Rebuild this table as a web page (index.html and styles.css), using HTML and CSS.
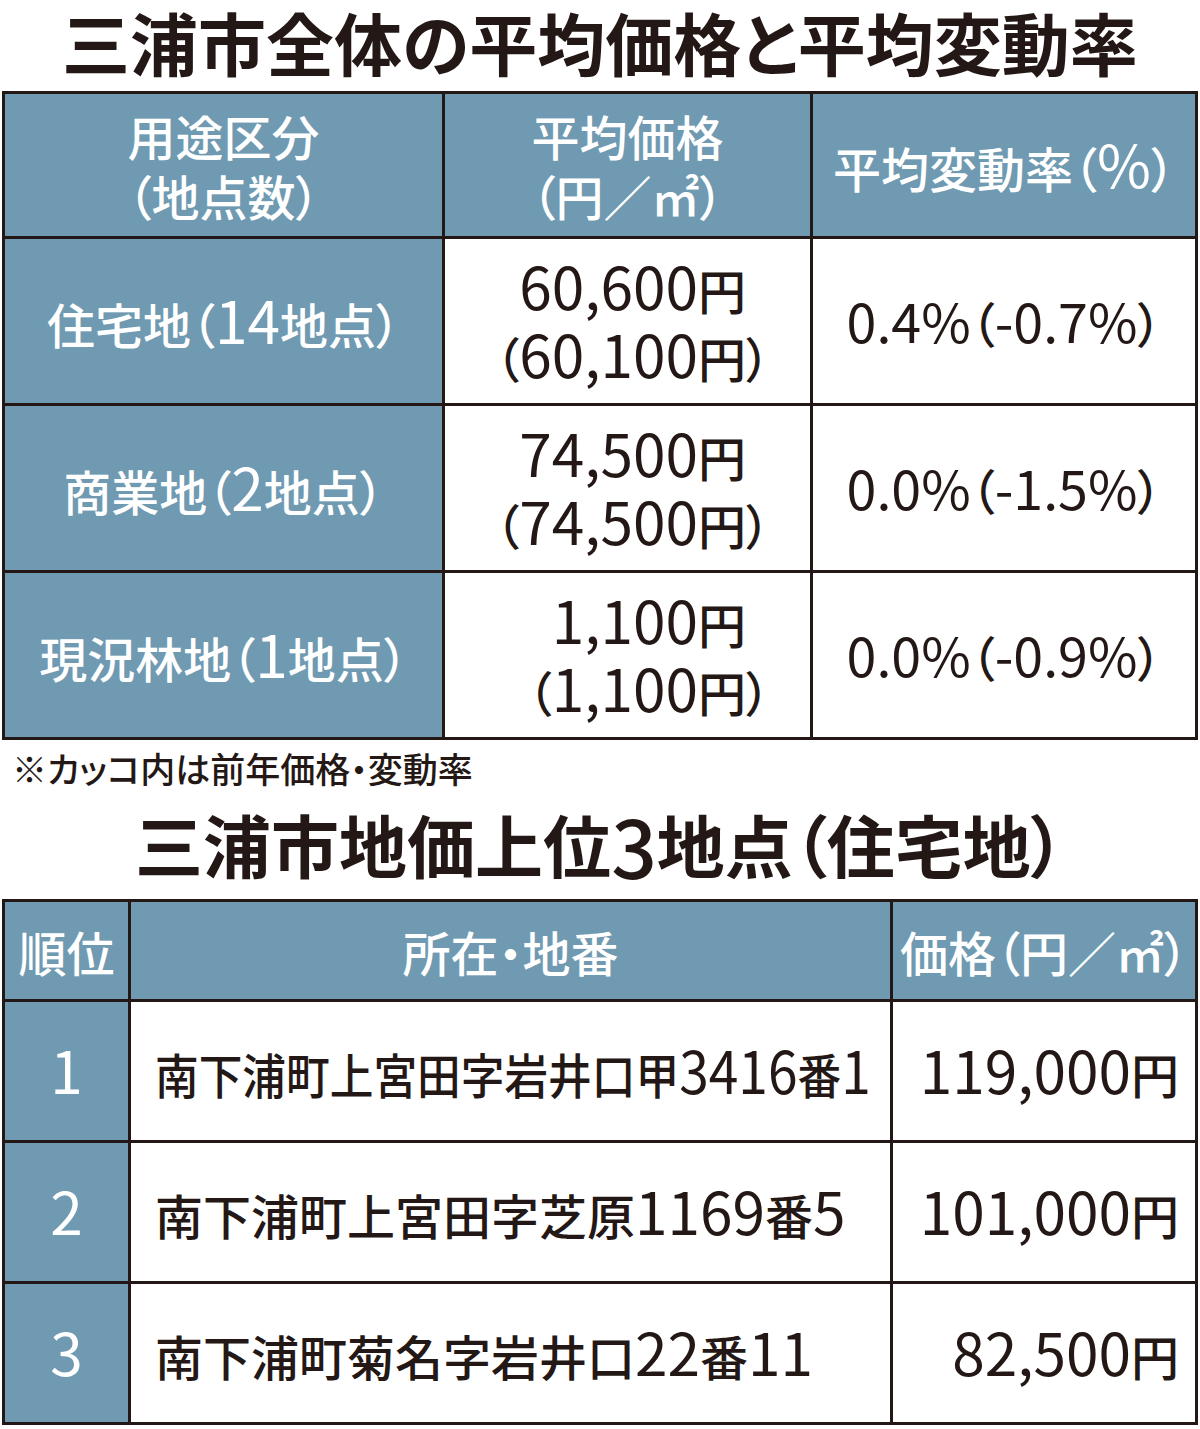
FILE: index.html
```html
<!DOCTYPE html>
<html lang="ja">
<head>
<meta charset="utf-8">
<title>三浦市全体の平均価格と平均変動率</title>
<link rel="stylesheet" href="styles.css">
</head>
<body>
<div class="page">
  <h1 class="title t1">三浦市全体の平均価格と平均変動率</h1>
  <div class="grid g1">
    <div class="cell head"><div>用途区分<br>（地点数）</div></div>
    <div class="cell head"><div>平均価格<br>（円／㎡）</div></div>
    <div class="cell head"><div>平均変動率（<span class="n">%</span>）</div></div>

    <div class="cell head"><div>住宅地（<span class="n">14</span>地点）</div></div>
    <div class="cell price"><div><span class="l1"><span class="n">60,600</span>円</span><span class="l2">（<span class="n">60,100</span>円）</span></div></div>
    <div class="cell rate"><div><span class="n">0.4%</span>（<span class="n">-0.7%</span>）</div></div>

    <div class="cell head"><div>商業地（<span class="n">2</span>地点）</div></div>
    <div class="cell price"><div><span class="l1"><span class="n">74,500</span>円</span><span class="l2">（<span class="n">74,500</span>円）</span></div></div>
    <div class="cell rate"><div><span class="n">0.0%</span>（<span class="n">-1.5%</span>）</div></div>

    <div class="cell head"><div>現況林地（<span class="n">1</span>地点）</div></div>
    <div class="cell price"><div><span class="l1"><span class="n">1,100</span>円</span><span class="l2">（<span class="n">1,100</span>円）</span></div></div>
    <div class="cell rate"><div><span class="n">0.0%</span>（<span class="n">-0.9%</span>）</div></div>
  </div>
  <p class="note">※カッコ内は前年価格・変動率</p>
  <h2 class="title t2">三浦市地価上位<span class="n">3</span>地点（住宅地）</h2>
  <div class="grid g2">
    <div class="cell head"><div>順位</div></div>
    <div class="cell head"><div>所在・地番</div></div>
    <div class="cell head"><div>価格（円／㎡）</div></div>

    <div class="cell head"><div><span class="n">1</span></div></div>
    <div class="cell addr"><div class="narrow">南下浦町上宮田字岩井口甲<span class="n">3416</span>番<span class="n">1</span></div></div>
    <div class="cell yen"><div><span class="n">119,000</span>円</div></div>

    <div class="cell head"><div><span class="n">2</span></div></div>
    <div class="cell addr"><div>南下浦町上宮田字芝原<span class="n">1169</span>番<span class="n">5</span></div></div>
    <div class="cell yen"><div><span class="n">101,000</span>円</div></div>

    <div class="cell head"><div><span class="n">3</span></div></div>
    <div class="cell addr"><div>南下浦町菊名字岩井口<span class="n">22</span>番<span class="n">11</span></div></div>
    <div class="cell yen"><div><span class="n">82,500</span>円</div></div>
  </div>
</div>
</body>
</html>
```

FILE: styles.css
```css
* {
  box-sizing: border-box;
  margin: 0;
  padding: 0;
}

body {
  margin: 0;
  background: #ffffff;
  color: #231815;
  font-family: "Noto Sans CJK JP", "Noto Sans", sans-serif;
  font-feature-settings: "palt";
}

.page {
  width: 1200px;
  padding: 0 2px;
}

.title {
  display: flex;
  align-items: center;
  justify-content: center;
  font-weight: 700;
  white-space: nowrap;
  line-height: 1.2;
}

.t1 {
  font-size: 68px;
  height: 91px;
  padding-bottom: 7px;
}

.t2 {
  font-size: 68px;
  height: 103px;
  padding-bottom: 7px;
}

.t2 .n {
  font-weight: 500;
  font-size: 1.18em;
}

.grid {
  display: grid;
  background: #231815;
  padding: 3px;
  gap: 3px;
}

.g1 {
  grid-template-columns: 437px 365px 382px;
  grid-template-rows: 142px 164px 164px 164px;
}

.g2 {
  grid-template-columns: 123px 759px 302px;
  grid-template-rows: 97px 138px 138px 138px;
}

.cell {
  display: flex;
  align-items: center;
  justify-content: center;
  background: #ffffff;
  font-size: 48px;
  font-weight: 500;
  line-height: 60px;
  text-align: center;
  white-space: nowrap;
}

.head {
  background: #6f9ab1;
  color: #ffffff;
}

.n {
  font-size: 1.22em;
  font-weight: 400;
}

.price {
  justify-content: flex-end;
  padding-right: 40px;
  line-height: 63px;
}

.price > div {
  text-align: right;
}

.l1,
.l2 {
  display: block;
}

.l1 {
  margin-right: 24px;
}

.rate .n {
  font-size: 1.12em;
}

.addr {
  justify-content: flex-start;
  padding-left: 24px;
}

.narrow {
  transform: scaleX(0.91);
  transform-origin: left center;
}

.yen {
  justify-content: flex-end;
  padding-right: 16px;
}

.note {
  font-size: 35px;
  font-weight: 500;
  height: 56px;
  line-height: 56px;
  padding-left: 10px;
}
```
